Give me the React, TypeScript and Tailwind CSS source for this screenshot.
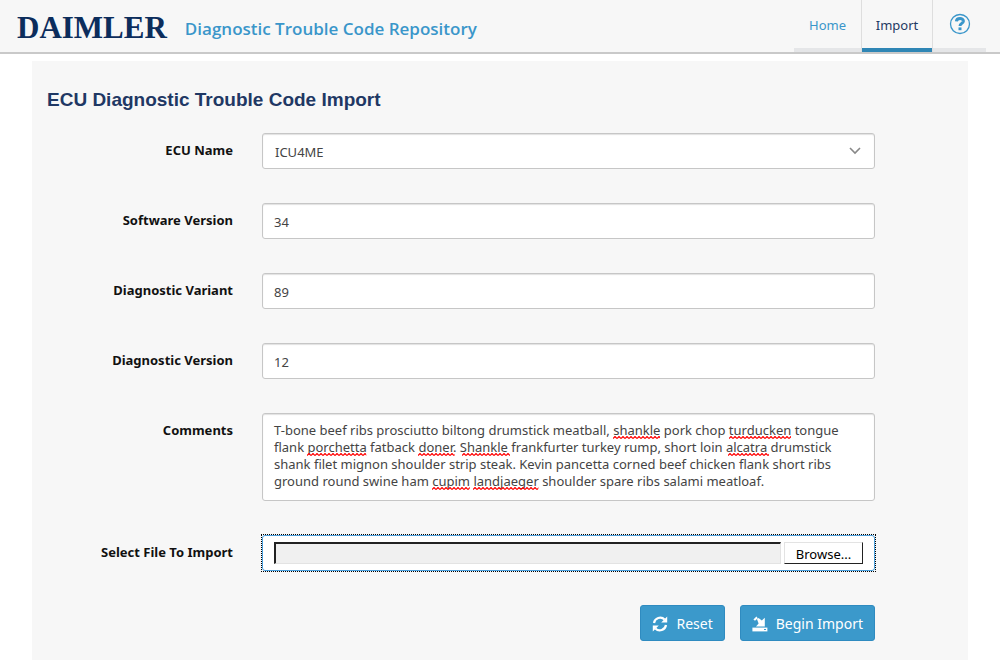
import { useRef, useState } from "react";
import type { ReactNode } from "react";

const fieldClass =
  "block w-full rounded-[3px] border border-[#c6c6c6] bg-white text-[#444] shadow-[inset_0_1px_1px_rgba(0,0,0,0.12)]";

const buttonClass =
  "flex h-9 items-center gap-2 rounded-[3px] border border-[#2f8bc0] bg-[#3b99cb] px-[11px] pt-0.5";

const initialComments =
  "T-bone beef ribs prosciutto biltong drumstick meatball, shankle pork chop turducken tongue flank porchetta fatback doner. Shankle frankfurter turkey rump, short loin alcatra drumstick shank filet mignon shoulder strip steak. Kevin pancetta corned beef chicken flank short ribs ground round swine ham cupim landjaeger shoulder spare ribs salami meatloaf.";

const unknownWords =
  /\b(shankle|turducken|porchetta|doner|alcatra|cupim|landjaeger)\b/gi;

function FormRow({
  id,
  label,
  children,
}: {
  id: string;
  label: string;
  children: ReactNode;
}) {
  return (
    <div className="flex items-start gap-[29px]">
      <label
        htmlFor={id}
        className="w-[186px] shrink-0 pt-[7px] text-right text-[13px] leading-5 font-bold text-[#111]"
      >
        {label}
      </label>
      <div className="min-w-0 flex-1">{children}</div>
    </div>
  );
}

function TextRow({
  id,
  label,
  value,
}: {
  id: string;
  label: string;
  value: string;
}) {
  return (
    <FormRow id={id} label={label}>
      <input
        id={id}
        type="text"
        defaultValue={value}
        className={`${fieldClass} h-9 px-[11px] pt-0.5 text-[13px]`}
      />
    </FormRow>
  );
}

function Squiggle() {
  return (
    <svg className="visible absolute bottom-0 left-0 h-[3px] w-full">
      <defs>
        <pattern id="squiggle" width="4" height="3" patternUnits="userSpaceOnUse">
          <path d="M0 2.5L2 .5L4 2.5" fill="none" stroke="#f00" strokeWidth="1.2" />
        </pattern>
      </defs>
      <rect width="100%" height="3" fill="url(#squiggle)" />
    </svg>
  );
}

function CommentsBox({ id }: { id: string }) {
  const [text, setText] = useState(initialComments);

  return (
    <div className="relative">
      <textarea
        id={id}
        rows={4}
        spellCheck={false}
        value={text}
        onChange={(e) => setText(e.target.value)}
        className={`${fieldClass} h-22 resize-none overflow-hidden px-[11px] py-2 text-[13px] leading-[17px]`}
      />
      {/* hidden copy wraps like the textarea, only the spelling marks show */}
      <div
        aria-hidden="true"
        className="pointer-events-none invisible absolute inset-0 overflow-hidden border px-[11px] py-2 text-[13px] leading-[17px] whitespace-pre-wrap"
      >
        {text.split(unknownWords).map((part, i) =>
          i % 2 === 1 ? (
            <span key={i} className="relative">
              {part}
              <Squiggle />
            </span>
          ) : (
            part
          ),
        )}
      </div>
    </div>
  );
}

function FilePicker({ id }: { id: string }) {
  const picker = useRef<HTMLInputElement>(null);
  const [fileName, setFileName] = useState("");

  return (
    <div className="-m-px border border-dotted border-black">
      <div className="flex h-9 items-center gap-[3px] rounded-[3px] border border-[#4a9fdc] bg-white px-[11px]">
        <input
          id={id}
          type="text"
          readOnly
          value={fileName}
          className="h-[22px] min-w-0 flex-1 border-t-2 border-r border-b border-l-2 border-t-[#222] border-r-[#e3e3e3] border-b-[#e3e3e3] border-l-[#222] bg-[#f0f0f0] px-1 text-[13px]"
        />
        <button
          type="button"
          onClick={() => picker.current?.click()}
          className="h-[22px] w-[79px] border border-t-[#e3e3e3] border-r-[#222] border-b-[#222] border-l-[#e3e3e3] bg-white pt-0.5 text-[13px] leading-[18px] text-black"
        >
          Browse...
        </button>
        <input
          ref={picker}
          type="file"
          aria-label="File"
          className="hidden"
          onChange={(e) => setFileName(e.target.files?.[0]?.name ?? "")}
        />
      </div>
    </div>
  );
}

function RefreshIcon() {
  return (
    <svg viewBox="0 0 16 16" className="size-4" aria-hidden="true">
      <path
        d="M2 7A6.2 6.2 0 0 1 12.6 3.6M14 9A6.2 6.2 0 0 1 3.4 12.4"
        fill="none"
        stroke="currentColor"
        strokeWidth="2.2"
      />
      <path d="M15.2.6V6.6H9.2ZM.8 15.4V9.4H6.8Z" fill="currentColor" />
    </svg>
  );
}

function ImportIcon() {
  return (
    <svg viewBox="0 0 16 16" className="size-4" aria-hidden="true">
      <path
        d="M1.4 3.4L4.4.6L5.8 2.2L3 4.8ZM5 3.2L6.6 2L9.8 4.4L12.8 1.8V10.4H4L6.6 7.4Z"
        fill="currentColor"
      />
      <path d="M.4 11.6H15.4V15.4H.4Z" fill="currentColor" />
      <path d="M12 13.5H14" stroke="#3b99cb" />
    </svg>
  );
}

function Header() {
  return (
    <header className="flex h-[54px] items-stretch border-b-2 border-[#c9c9c9] bg-[#f7f7f7] pr-3.5 pl-[17px]">
      <div className="flex flex-1 items-center gap-[18px] pt-1">
        <span className="font-['Liberation_Serif',serif] text-[31px] leading-9 font-bold text-[#0c2d5c]">
          DAIMLER
        </span>
        <span className="pt-0.5 font-['Open_Sans',sans-serif] text-[17px] leading-6 font-semibold text-[#3a96ca]">
          Diagnostic Trouble Code Repository
        </span>
      </div>
      <nav className="flex gap-px bg-[#dedede] text-[13px]">
        <a
          href="#home"
          className="flex w-[67px] items-center justify-center border-b-4 border-[#e5e6e8] bg-[#f7f7f7] pt-1 text-[#3a96ca]"
        >
          Home
        </a>
        <a
          href="#import"
          aria-current="page"
          className="flex w-[70px] items-center justify-center border-b-4 border-[#2f86b5] bg-[#f7f7f7] pt-1 text-[#1f3a63]"
        >
          Import
        </a>
        <a
          href="#help"
          aria-label="Help"
          className="flex w-[53px] items-center justify-center border-b-4 border-[#e5e6e8] bg-[#f7f7f7] text-[#3a96ca]"
        >
          <svg viewBox="0 0 22 22" className="size-[22px]" aria-hidden="true">
            <circle cx="11" cy="11" r="9.5" fill="none" stroke="currentColor" strokeWidth="1.3" />
            <path
              d="M7.4 8.4C7.6 4.6 14.6 4.6 14.4 8.2C14.2 10.4 11 10.4 11 13"
              fill="none"
              stroke="currentColor"
              strokeWidth="3"
            />
            <path d="M9.5 14.4H12.5V17.2H9.5Z" fill="currentColor" />
          </svg>
        </a>
      </nav>
    </header>
  );
}

export default function App() {
  return (
    <div className="min-h-screen bg-white font-['Noto_Sans',sans-serif]">
      <Header />
      <main className="mx-8 mt-[7px] bg-[#f7f7f7] px-[15px] pb-5">
        <h1 className="pt-[25px] pb-[19px] font-['Liberation_Sans',sans-serif] text-[19px] leading-7 font-bold text-[#1f3864]">
          ECU Diagnostic Trouble Code Import
        </h1>
        <form
          className="mr-[78px] flex flex-col gap-[34px]"
          onSubmit={(e) => e.preventDefault()}
        >
          <FormRow id="ecu-name" label="ECU Name">
            <div className="relative">
              <select
                id="ecu-name"
                defaultValue="ICU4ME"
                className={`${fieldClass} h-9 appearance-none px-3 pt-[3px] text-[13px]`}
              >
                <option>ICU4ME</option>
              </select>
              <svg
                viewBox="0 0 12 8"
                className="pointer-events-none absolute top-3.5 right-3.5 h-2 w-3"
                aria-hidden="true"
              >
                <path d="M1 1L6 6L11 1" fill="none" stroke="#888" strokeWidth="1.6" />
              </svg>
            </div>
          </FormRow>
          <TextRow id="software-version" label="Software Version" value="34" />
          <TextRow id="diagnostic-variant" label="Diagnostic Variant" value="89" />
          <TextRow id="diagnostic-version" label="Diagnostic Version" value="12" />
          <FormRow id="comments" label="Comments">
            <CommentsBox id="comments" />
          </FormRow>
          <FormRow id="import-file" label="Select File To Import">
            <FilePicker id="import-file" />
          </FormRow>
          <div className="flex justify-end gap-[15px] text-sm text-white">
            <button type="reset" className={buttonClass}>
              <RefreshIcon />
              Reset
            </button>
            <button type="submit" className={buttonClass}>
              <ImportIcon />
              Begin Import
            </button>
          </div>
        </form>
      </main>
    </div>
  );
}
